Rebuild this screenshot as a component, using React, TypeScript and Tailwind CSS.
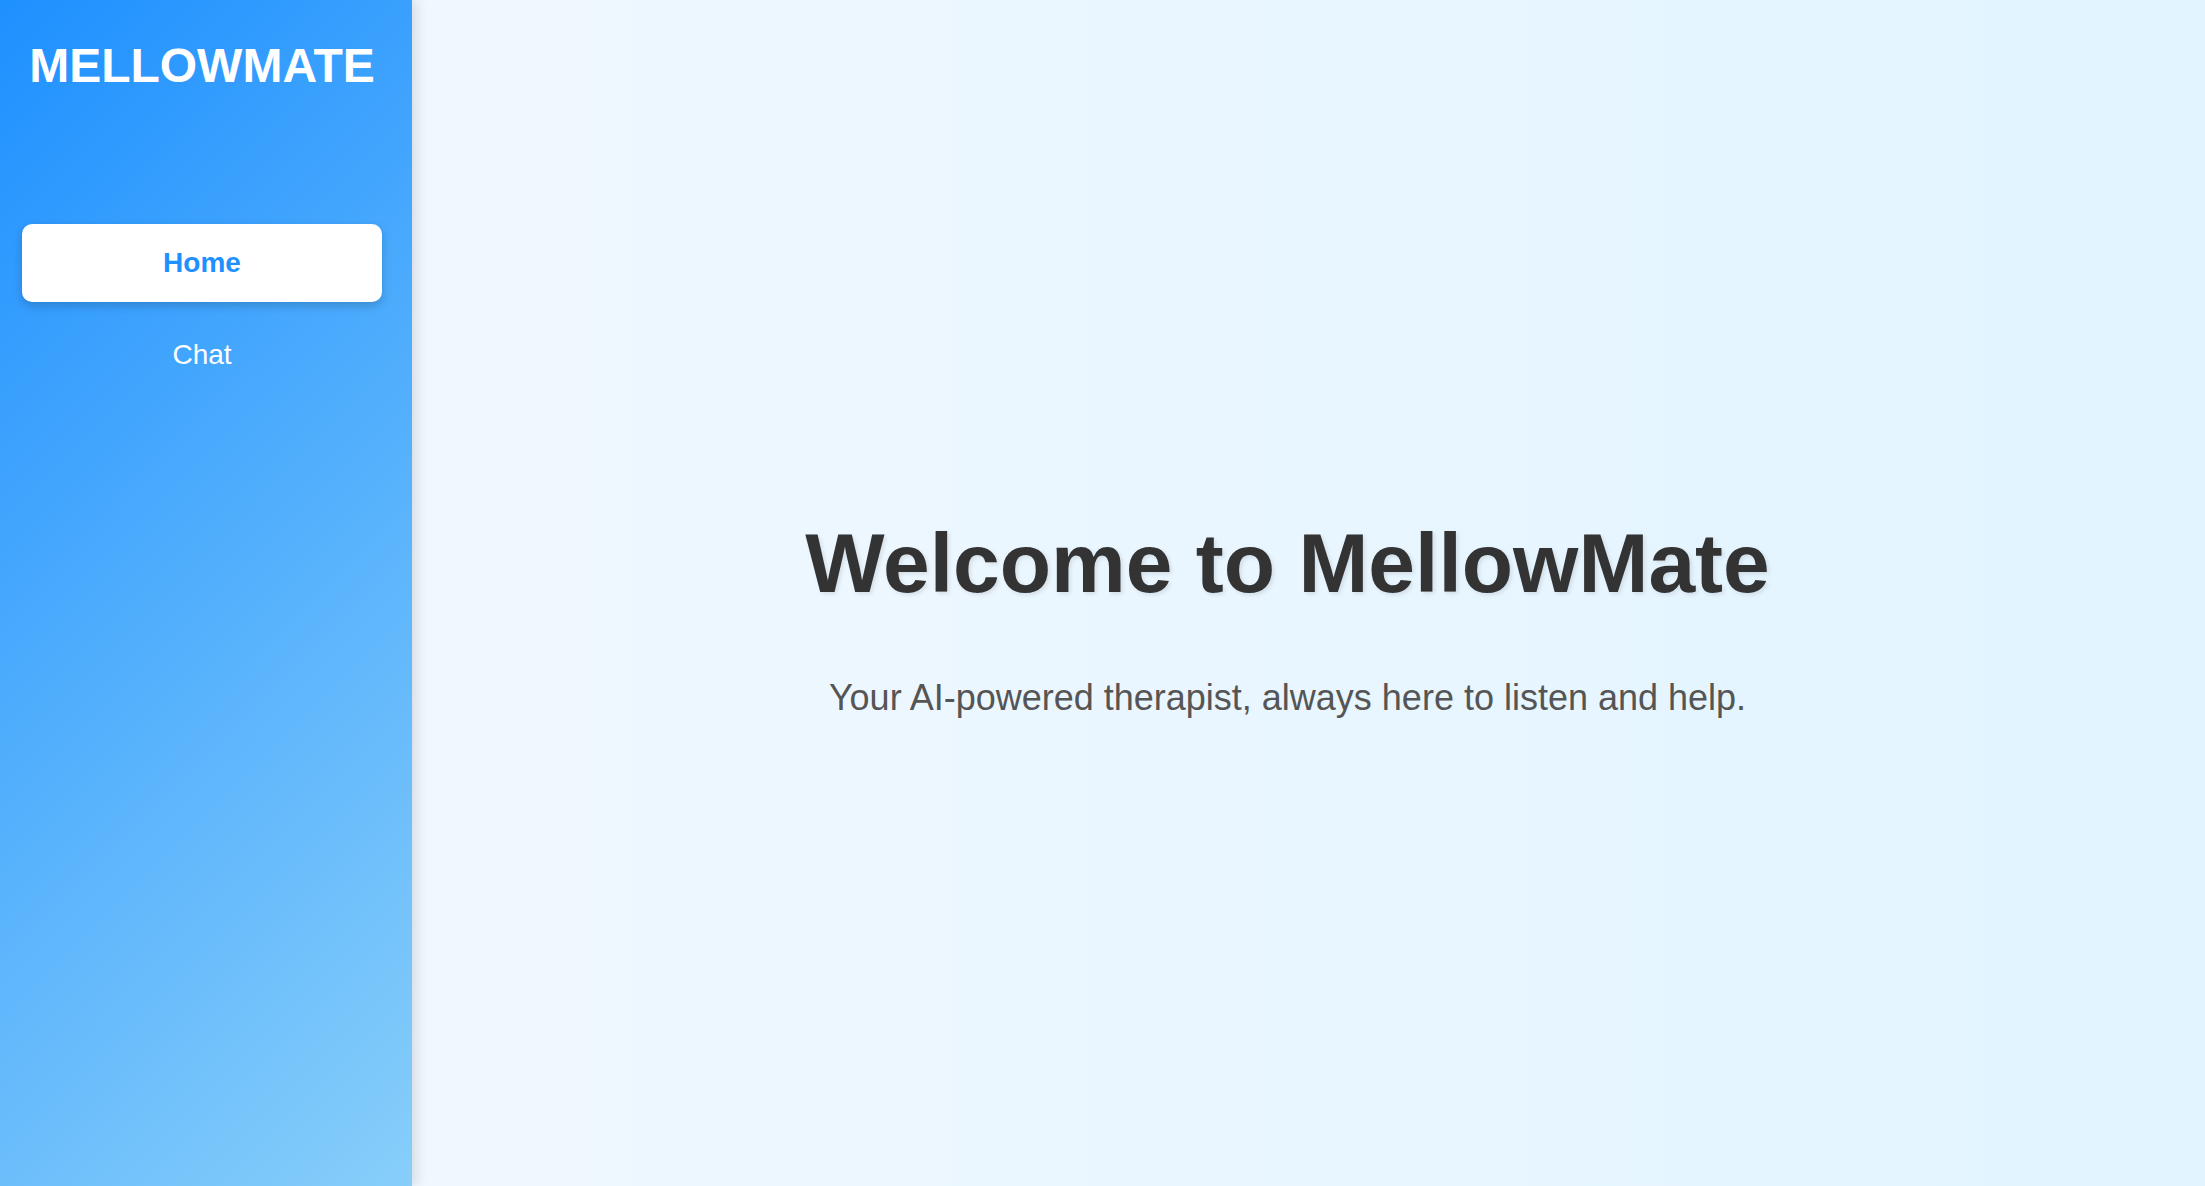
import React, { useState } from 'react';

const App: React.FC = () => {
  const [page, setPage] = useState('home');

  return (
    <div className="flex h-screen w-full overflow-hidden font-['Liberation_Sans',Arial,sans-serif]">
      <aside className="relative z-10 flex w-[412px] shrink-0 flex-col bg-[linear-gradient(135deg,#1e90ff,#87cefa)] pl-[22px] pr-[30px] shadow-[4px_0_12px_rgba(0,0,0,0.12)]">
        <h1 className="mt-[38px] text-center text-[48px] leading-[55px] font-bold text-white">MELLOWMATE</h1>
        <nav className="mt-[131px] flex flex-col gap-[14px]">
          <button
            onClick={() => setPage('home')}
            className={
              page === 'home'
                ? 'h-[78px] rounded-[10px] bg-white text-[28px] font-bold text-[#1e90ff] shadow-[0_4px_10px_rgba(0,0,0,0.18)]'
                : 'h-[78px] rounded-[10px] text-[28px] text-white'
            }
          >
            Home
          </button>
          <button
            onClick={() => setPage('chat')}
            className={
              page === 'chat'
                ? 'h-[78px] rounded-[10px] bg-white text-[28px] font-bold text-[#1e90ff] shadow-[0_4px_10px_rgba(0,0,0,0.18)]'
                : 'h-[78px] rounded-[10px] text-[28px] text-white'
            }
          >
            Chat
          </button>
        </nav>
      </aside>
      <main className="flex flex-1 flex-col items-center justify-center bg-gradient-to-r from-[#f0f8ff] to-[#e1f4ff] pr-[42px] pt-[46px]">
        <h2 className="text-[84px] leading-[97px] font-bold text-[#333333] [text-shadow:2px_2px_4px_rgba(0,0,0,0.1)]">
          Welcome to MellowMate
        </h2>
        <p className="mt-[65px] text-[36px] leading-[41px] text-[#555555]">
          Your AI-powered therapist, always here to listen and help.
        </p>
      </main>
    </div>
  );
};

export default App;
